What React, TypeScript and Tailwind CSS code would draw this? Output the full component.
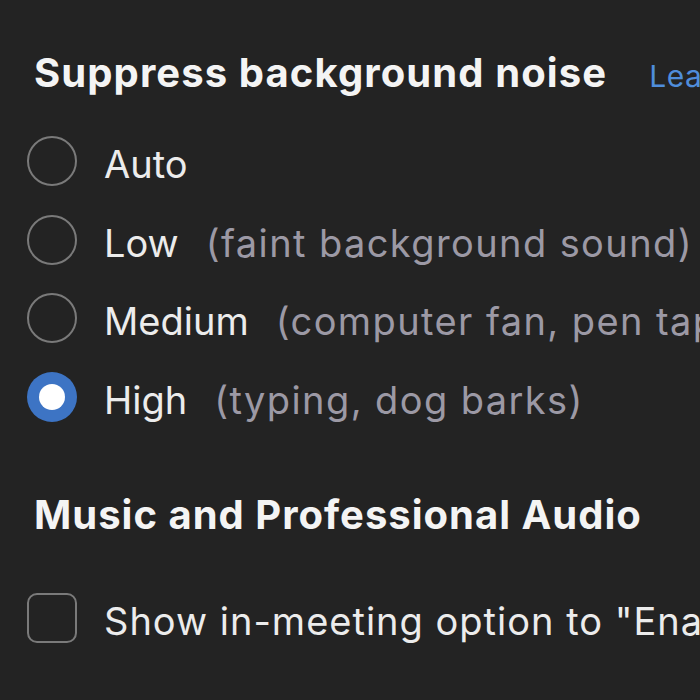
import React from 'react';

interface NoiseOption {
  id: string;
  label: string;
  hint?: string;
}

const NOISE_OPTIONS: NoiseOption[] = [
  { id: 'auto', label: 'Auto' },
  { id: 'low', label: 'Low', hint: '(faint background sound)' },
  { id: 'medium', label: 'Medium', hint: '(computer fan, pen taps)' },
  { id: 'high', label: 'High', hint: '(typing, dog barks)' },
];

function Radio({ checked }: { checked: boolean }) {
  if (checked) {
    return (
      <span className="flex h-[50px] w-[50px] shrink-0 items-center justify-center rounded-full bg-[#3d74c4]">
        <span className="h-[26px] w-[26px] rounded-full bg-white" />
      </span>
    );
  }
  return <span className="h-[50px] w-[50px] shrink-0 rounded-full border-[2.5px] border-[#7a7a7a]" />;
}

export default function App() {
  const selected = 'high';

  return (
    <div className="h-[700px] w-[700px] overflow-hidden bg-[#232323] font-['Inter',sans-serif] text-[38px] text-[#ececec]">
      <div className="pt-[49px]">
        <div className="flex items-baseline whitespace-nowrap pl-[34px]">
          <h2 className="text-[40px] font-bold leading-[48px] tracking-[1.1px] text-[#f4f4f4]">
            Suppress background noise
          </h2>
          <a className="ml-[42px] text-[30px] tracking-[0.5px] text-[#4f8ddb]">Learn more</a>
        </div>

        <div className="mt-[23px] flex flex-col pl-[27px]">
          {NOISE_OPTIONS.map((o) => (
            <label key={o.id} className="flex h-[78.5px] items-center whitespace-nowrap">
              <Radio checked={o.id === selected} />
              <span className="ml-[27px] mt-[7px]">{o.label}</span>
              {o.hint && <span className="ml-[27px] mt-[7px] tracking-[1.4px] text-[#9c99a5]">{o.hint}</span>}
            </label>
          ))}
        </div>
      </div>

      <div className="mt-[55px]">
        <h2 className="whitespace-nowrap pl-[34px] text-[40px] font-bold leading-[48px] tracking-[1px] text-[#f4f4f4]">
          Music and Professional Audio
        </h2>
        <label className="mt-[47px] flex items-center whitespace-nowrap pl-[27px]">
          <span className="h-[50px] w-[50px] shrink-0 rounded-[10px] border-[2.5px] border-[#7a7a7a]" />
          <span className="ml-[27px] mt-[7px] tracking-[1px]">
            Show in-meeting option to "Enable Original Sound" from microphone
          </span>
        </label>
      </div>
    </div>
  );
}
